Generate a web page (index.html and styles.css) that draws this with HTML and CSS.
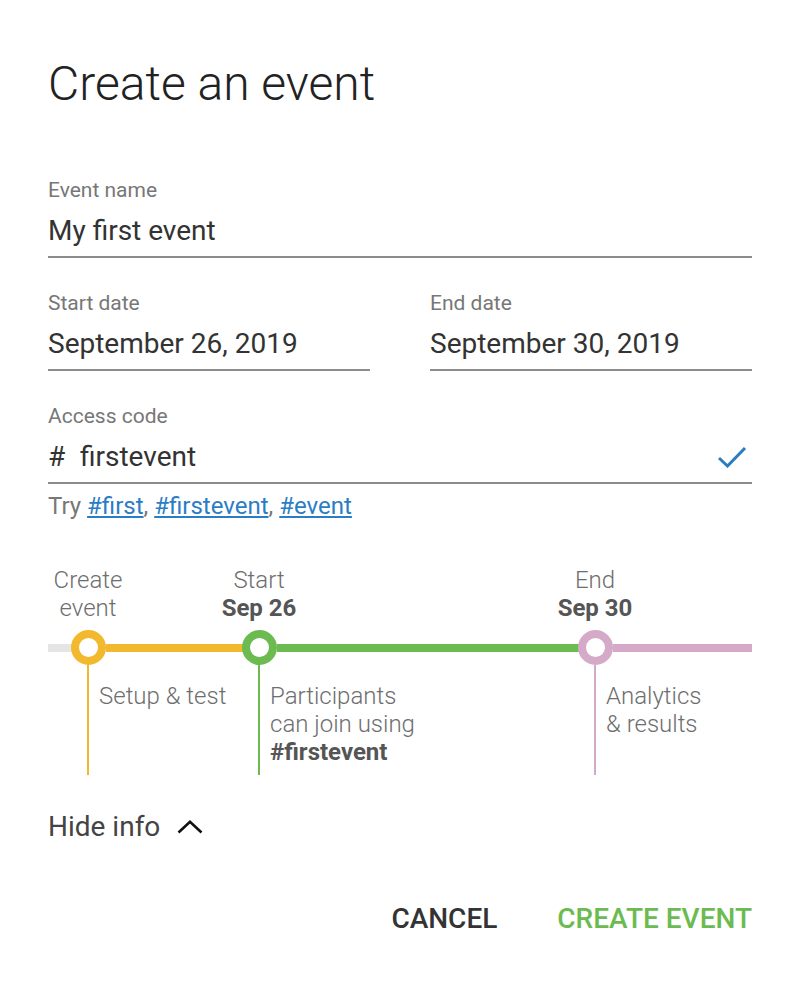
FILE: index.html
```html
<!DOCTYPE html>
<html lang="en">
<head>
    <meta charset="UTF-8">
    <meta name="viewport" content="width=device-width, initial-scale=1.0">
    <title>Create an event</title>
    <link rel="stylesheet" href="styles.css">
</head>
<body>
    <div class="dialog">
        <h1>Create an event</h1>

        <!-- Event name -->
        <div class="field">
            <label for="eventName">Event name</label>
            <input class="input" id="eventName" type="text" value="My first event">
        </div>

        <!-- Dates -->
        <div class="date-row">
            <div class="field">
                <label for="startDate">Start date</label>
                <input class="input" id="startDate" type="text" value="September 26, 2019">
            </div>
            <div class="field">
                <label for="endDate">End date</label>
                <input class="input" id="endDate" type="text" value="September 30, 2019">
            </div>
        </div>

        <!-- Access code -->
        <div class="field">
            <label for="accessCode">Access code</label>
            <div class="code-box">
                <span class="hash">#</span>
                <input class="input code-input" id="accessCode" type="text" value="firstevent">
                <svg class="check" width="30" height="22" viewBox="0 0 30 22">
                    <path d="M2 12 L10.5 20 L28 2" fill="none" stroke="#2b7dc3" stroke-width="3"/>
                </svg>
            </div>
            <p class="suggest">Try <a href="#">#first</a>, <a href="#">#firstevent</a>, <a href="#">#event</a></p>
        </div>

        <!-- Timeline -->
        <div class="timeline">
            <div class="tl-row tl-heads">
                <div></div>
                <div class="tl-head"><div class="tl-label">Create<br>event</div></div>
                <div class="tl-head"><div class="tl-label">Start<br><b>Sep 26</b></div></div>
                <div class="tl-head"><div class="tl-label">End<br><b>Sep 30</b></div></div>
            </div>
            <div class="tl-row tl-bar">
                <div class="seg gray"><span class="seg-line"></span></div>
                <div class="seg yellow"><span class="dot"></span><span class="seg-line"></span></div>
                <div class="seg green"><span class="dot"></span><span class="seg-line"></span></div>
                <div class="seg pink"><span class="dot"></span><span class="seg-line"></span></div>
            </div>
            <div class="tl-row tl-bodies">
                <div></div>
                <div class="tl-body yellow">Setup &amp; test</div>
                <div class="tl-body green">Participants<br>can join using<br><b>#firstevent</b></div>
                <div class="tl-body pink">Analytics<br>&amp; results</div>
            </div>
        </div>

        <button class="toggle">
            Hide info
            <svg width="26" height="14" viewBox="0 0 26 14">
                <path d="M1.5 12.5 L13 1.8 L24.5 12.5" fill="none" stroke="#111" stroke-width="2.6"/>
            </svg>
        </button>

        <div class="actions">
            <button class="action cancel">CANCEL</button>
            <button class="action create">CREATE EVENT</button>
        </div>
    </div>
</body>
</html>
```

FILE: styles.css
```css
body {
    margin: 0;
    padding: 0;
    background-color: #ffffff;
    font-family: 'Roboto', 'Liberation Sans', sans-serif;
    color: #333333;
}

.dialog {
    padding: 56px 44px 0 48px;
}

h1 {
    margin: 0;
    font-size: 48px;
    line-height: 56px;
    font-weight: 300;
    color: #222222;
}

.field {
    display: flex;
    flex-direction: column;
    min-width: 0;
}

h1 + .field {
    margin-top: 66px;
}

.field label {
    font-size: 21px;
    line-height: 24px;
    color: #777777;
}

.input {
    width: 100%;
    margin-top: 11px;
    padding: 0 0 7px 0;
    height: 36px;
    border: none;
    border-bottom: 2px solid #8c8c8c;
    font-family: inherit;
    font-size: 28px;
    line-height: 36px;
    color: #333333;
    background: transparent;
    outline: none;
}

.date-row {
    display: grid;
    grid-template-columns: 1fr 1fr;
    gap: 60px;
    margin-top: 33px;
}

.date-row + .field {
    margin-top: 33px;
}

.code-box {
    display: flex;
    align-items: center;
    margin-top: 11px;
    padding-bottom: 7px;
    border-bottom: 2px solid #8c8c8c;
}

.hash {
    font-size: 28px;
    line-height: 36px;
    width: 32px;
}

.code-input {
    flex: 1;
    margin: 0;
    padding: 0;
    border: none;
    min-width: 0;
}

.check {
    margin-right: 5px;
}

.suggest {
    margin: 8px 0 0 0;
    font-size: 24px;
    line-height: 28px;
    color: #777777;
}

.suggest a {
    color: #2a7dc5;
}

/* timeline */
.timeline {
    margin-top: 46px;
}

.tl-row {
    display: grid;
    grid-template-columns: 40px 171px 336px 1fr;
}

.tl-head {
    width: 0;
    display: flex;
    flex-direction: column;
    align-items: center;
}

.tl-label {
    white-space: nowrap;
    text-align: center;
    font-size: 24px;
    line-height: 28px;
    font-weight: 300;
    color: #6e6e6e;
}

.tl-label b,
.tl-body b {
    font-weight: 700;
    color: #555555;
}

.tl-bar {
    margin-top: 8px;
}

.seg {
    display: flex;
    align-items: center;
    height: 35px;
}

.seg-line {
    flex: 1;
    height: 8px;
}

.dot {
    width: 35px;
    height: 35px;
    margin-left: -17px;
    box-sizing: border-box;
    border: 8px solid;
    border-radius: 50%;
    background-color: #ffffff;
}

.gray .seg-line { background-color: #e5e5e5; }
.yellow .seg-line { background-color: #f2b92e; }
.green .seg-line { background-color: #6cbb50; }
.pink .seg-line { background-color: #d5aac9; }

.yellow .dot { border-color: #f2b92e; }
.green .dot { border-color: #6cbb50; }
.pink .dot { border-color: #d5aac9; }

.tl-body {
    height: 110px;
    box-sizing: border-box;
    margin-left: -1px;
    padding: 17px 0 0 10px;
    border-left: 2px solid;
    font-size: 24px;
    line-height: 28px;
    font-weight: 300;
    color: #6e6e6e;
}

.tl-body.yellow { border-color: #f2b92e; }
.tl-body.green { border-color: #6cbb50; }
.tl-body.pink { border-color: #d5aac9; }

.toggle {
    display: flex;
    align-items: center;
    gap: 17px;
    margin-top: 36px;
    padding: 0;
    border: none;
    background: none;
    font-family: inherit;
    font-size: 28px;
    line-height: 32px;
    color: #444444;
    cursor: pointer;
}

.actions {
    display: flex;
    justify-content: flex-end;
    gap: 60px;
    margin-top: 60px;
}

.action {
    padding: 0;
    border: none;
    background: none;
    font-family: inherit;
    font-size: 28px;
    line-height: 32px;
    font-weight: 500;
    cursor: pointer;
}

.cancel {
    color: #333333;
}

.create {
    color: #6cbb50;
}
```
